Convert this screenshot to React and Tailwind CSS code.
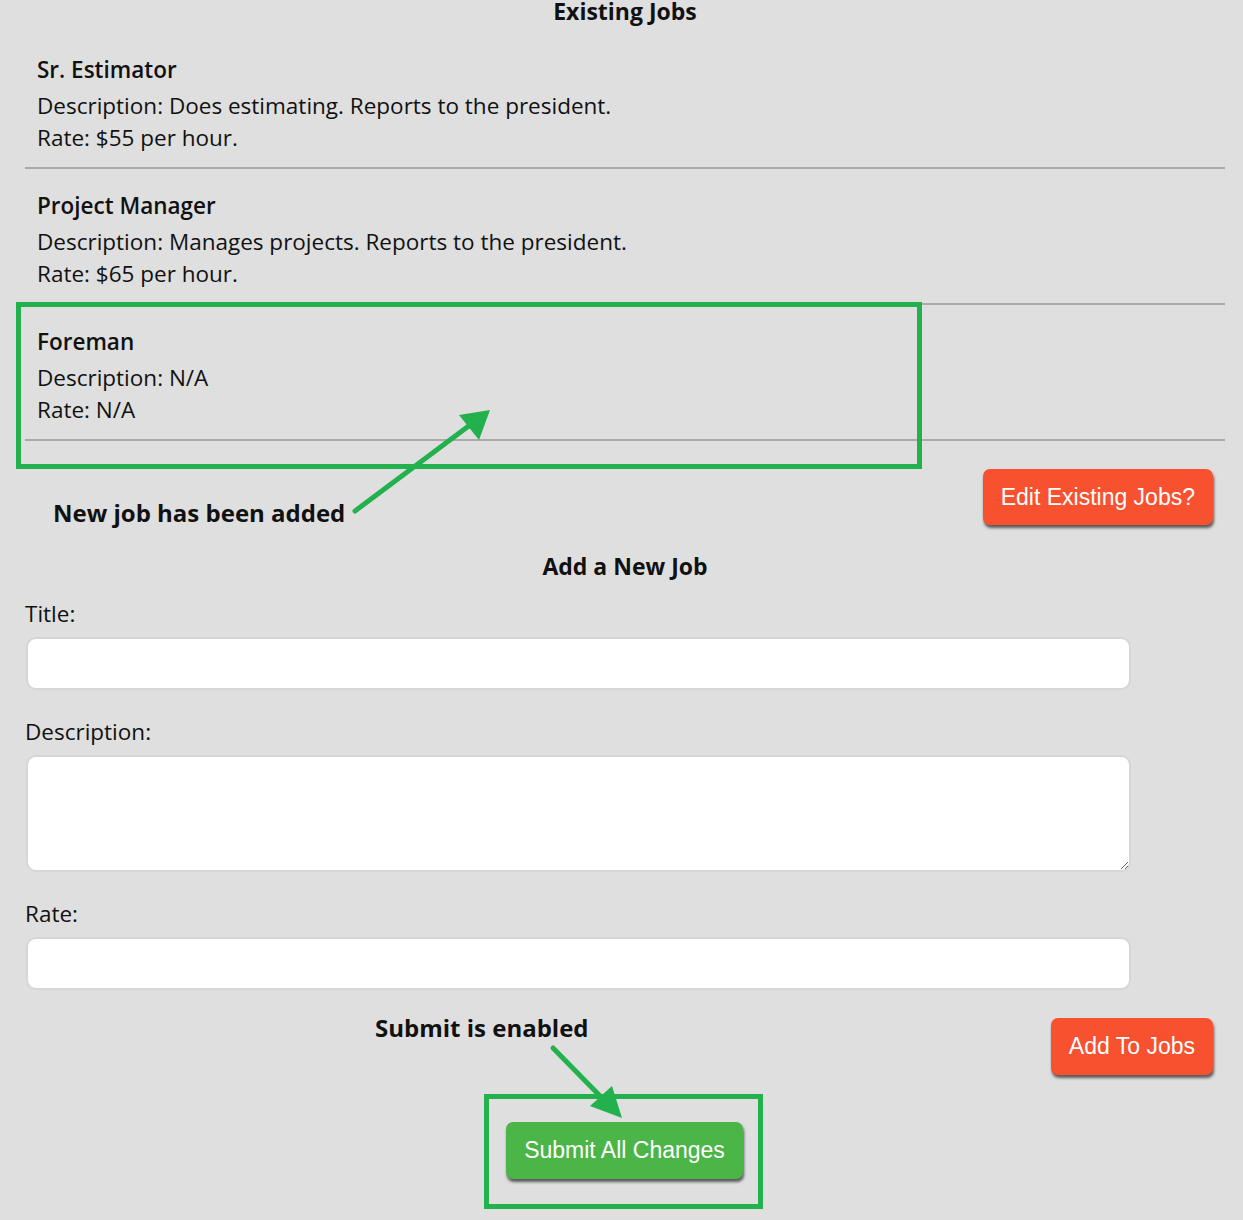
import { useState } from "react";

const jobs = [
  {
    title: "Sr. Estimator",
    description: "Does estimating. Reports to the president.",
    rate: "$55 per hour.",
  },
  {
    title: "Project Manager",
    description: "Manages projects. Reports to the president.",
    rate: "$65 per hour.",
  },
  { title: "Foreman", description: "N/A", rate: "N/A" },
];

export default function App() {
  const [form, setForm] = useState({ title: "", description: "", rate: "" });

  return (
    <div className="relative min-h-screen bg-[#dfdfdf] text-[#111] font-['Open_Sans','Segoe_UI',sans-serif] pb-10">
      {/* EXISTING JOBS */}
      <h2 className="h-[33px] pl-[7px] text-center text-[23px] leading-[22px] font-bold">
        Existing Jobs
      </h2>

      <div className="ml-[25px] mr-[18px]">
        {jobs.map((j) => (
          <div
            key={j.title}
            className="border-b-2 border-[#aaaaaa] px-3 pt-[21px] pb-[13px] text-[22.5px] leading-[32px]"
          >
            <p className="font-semibold mb-[4px]">{j.title}</p>
            <p>Description: {j.description}</p>
            <p>Rate: {j.rate}</p>
          </div>
        ))}
      </div>

      <div className="flex justify-end pr-[30px] mt-[28px]">
        <button className="h-[56px] px-[18px] rounded-[7px] bg-[#f8512f] text-white text-[23px] font-['Liberation_Sans',Arial,sans-serif] shadow-[1px_3px_3px_rgba(0,0,0,0.6)]">
          Edit Existing Jobs?
        </button>
      </div>

      {/* ADD A NEW JOB */}
      <h2 className="mt-[25px] pl-[7px] text-center text-[23px] leading-[32px] font-bold">
        Add a New Job
      </h2>

      <div className="px-[25px] w-[1132px]">
        <label className="block mt-[16px] text-[22.5px] leading-[32px]">Title:</label>
        <input
          value={form.title}
          onChange={(e) => setForm({ ...form, title: e.target.value })}
          className="block mt-[7px] ml-px w-[1105px] h-[53px] rounded-[10px] bg-white border-2 border-[#d6d6d6] outline-none px-3"
        />

        <label className="block mt-[26px] text-[22.5px] leading-[32px]">Description:</label>
        <textarea
          value={form.description}
          onChange={(e) => setForm({ ...form, description: e.target.value })}
          className="block mt-[7px] ml-px w-[1105px] h-[117px] rounded-[10px] bg-white border-2 border-[#d6d6d6] outline-none px-3"
        />

        <label className="block mt-[26px] text-[22.5px] leading-[32px]">Rate:</label>
        <input
          value={form.rate}
          onChange={(e) => setForm({ ...form, rate: e.target.value })}
          className="block mt-[7px] ml-px w-[1105px] h-[53px] rounded-[10px] bg-white border-2 border-[#d6d6d6] outline-none px-3"
        />
      </div>

      <div className="flex justify-end pr-[30px] mt-[28px]">
        <button className="h-[57px] px-[18px] rounded-[7px] bg-[#f8512f] text-white text-[23px] font-['Liberation_Sans',Arial,sans-serif] shadow-[1px_3px_3px_rgba(0,0,0,0.6)]">
          Add To Jobs
        </button>
      </div>

      <div className="flex justify-center mt-[47px] pl-[6px]">
        <button className="h-[57px] px-[18px] rounded-[7px] bg-[#4bb548] text-white text-[23px] font-['Liberation_Sans',Arial,sans-serif] shadow-[1px_3px_3px_rgba(0,0,0,0.6)]">
          Submit All Changes
        </button>
      </div>

      {/* annotations */}
      <svg
        className="absolute top-0 left-0 pointer-events-none"
        width="1243"
        height="1220"
      >
        <rect x="18.5" y="304.5" width="901" height="162" fill="none" stroke="#22b14c" strokeWidth="5" />
        <rect x="486.5" y="1096.5" width="274" height="110" fill="none" stroke="#22b14c" strokeWidth="5" />
        <line x1="355" y1="511" x2="470" y2="425" stroke="#22b14c" strokeWidth="5" strokeLinecap="round" />
        <polygon points="490,410 479,440 459,415" fill="#22b14c" />
        <line x1="553" y1="1048" x2="605" y2="1101" stroke="#22b14c" strokeWidth="5" strokeLinecap="round" />
        <polygon points="622,1118 590,1106 612,1086" fill="#22b14c" />
      </svg>
      <p className="absolute left-[53px] top-[497px] text-[24px] leading-[32px] font-bold">
        New job has been added
      </p>
      <p className="absolute left-[375px] top-[1012px] text-[24px] leading-[32px] font-bold">
        Submit is enabled
      </p>
    </div>
  );
}
